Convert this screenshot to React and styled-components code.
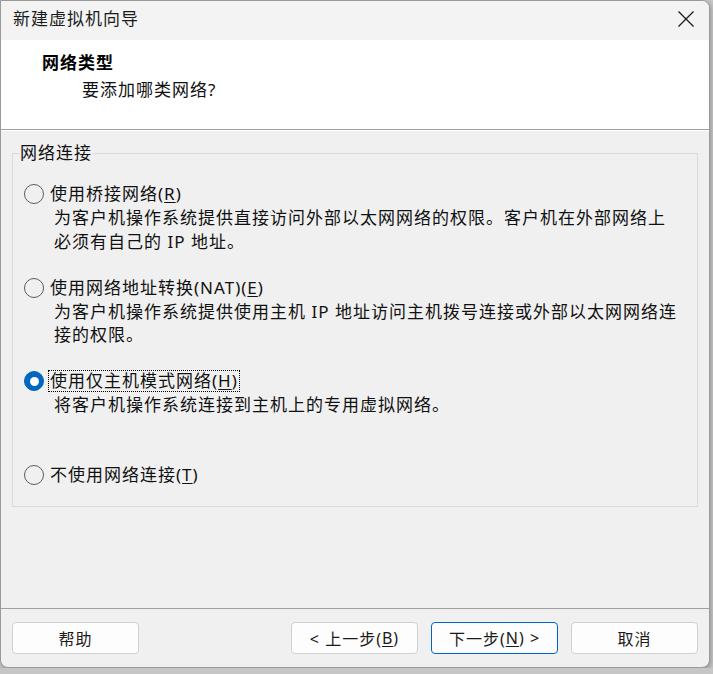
import React from "react";
import styled, { createGlobalStyle } from "styled-components";

const GlobalStyle = createGlobalStyle`
  html, body {
    margin: 0;
    padding: 0;
    background: #c6c6c6;
  }
  body {
    font-family: "Noto Sans", "Noto Sans CJK SC", sans-serif;
    color: #000;
  }
`;

const Window = styled.div`
  box-sizing: border-box;
  width: 710px;
  height: 668px;
  border: 1px solid #9a9a9a;
  border-radius: 0 8px 8px 8px;
  background: #f0f0f0;
  overflow: hidden;
  display: flex;
  flex-direction: column;
  box-shadow: 1px 2px 5px rgba(0, 0, 0, 0.25);
`;

const TitleBar = styled.div`
  height: 39px;
  flex: none;
  background: #f3f3f3;
  display: flex;
  align-items: center;
  justify-content: space-between;
  padding-left: 12px;
`;

const Title = styled.span`
  font-size: 17px;
  letter-spacing: 1px;
  color: #1b1b1b;
  line-height: 24px;
  margin-top: -3px;
`;

const CloseButton = styled.div`
  width: 46px;
  height: 39px;
  display: flex;
  align-items: center;
  justify-content: center;
  margin-top: -4px;
`;

const Header = styled.div`
  flex: none;
  height: 90px;
  background: #ffffff;
  border-bottom: 1px solid #a0a0a0;
  box-sizing: border-box;
  padding: 10px 0 0 41px;
`;

const HeaderTitle = styled.div`
  font-family: "Noto Sans CJK SC", sans-serif;
  font-weight: 700;
  font-size: 17px;
  letter-spacing: 1px;
  line-height: 24px;
`;

const HeaderSub = styled.div`
  font-size: 17px;
  letter-spacing: 1px;
  line-height: 24px;
  margin-top: 4px;
  padding-left: 40px;
  color: #111;
`;

const Main = styled.div`
  flex: 1;
  border-top: 1px solid #ffffff;
  display: flex;
  flex-direction: column;
`;

const Group = styled.fieldset`
  margin: 10px 11px 0 11px;
  padding: 17px 0 19px 0;
  border: 1px solid #dadada;
  min-width: 0;
`;

const Legend = styled.legend`
  font-size: 17px;
  letter-spacing: 1px;
  line-height: 24px;
  padding: 0 1px;
  margin-left: 6px;
  color: #111;
`;

const Option = styled.div`
  display: grid;
  grid-template-columns: 20px 1fr;
  column-gap: 5px;
  align-content: start;
  padding-left: 11px;
  height: ${(p) => (p.$last ? "24px" : "93.5px")};
`;

const Radio = styled.span`
  box-sizing: border-box;
  width: 20px;
  height: 20px;
  border-radius: 50%;
  align-self: center;
  position: relative;
  border: 1px solid ${(p) => (p.$checked ? "#0067c0" : "#5c5c5c")};
  background: ${(p) => (p.$checked ? "#0067c0" : "transparent")};
  &::after {
    content: "";
    display: ${(p) => (p.$checked ? "block" : "none")};
    position: absolute;
    left: 50%;
    top: 50%;
    width: 9px;
    height: 9px;
    margin: -4.5px 0 0 -4.5px;
    border-radius: 50%;
    background: #fff;
  }
`;

const Label = styled.span`
  justify-self: start;
  font-size: 17px;
  letter-spacing: 1px;
  line-height: 20px;
  height: 22px;
  padding: 0 1px;
  margin: 1px 0 1px -1px;
  box-sizing: border-box;
  border: 1px dotted ${(p) => (p.$focus ? "#000" : "transparent")};
  color: #111;
  u {
    text-underline-offset: 2px;
  }
`;

const Desc = styled.div`
  grid-column: 2;
  padding-left: 5px;
  font-size: 17px;
  letter-spacing: 1px;
  line-height: 23.5px;
  color: #111;
  white-space: pre-line;
`;

const Footer = styled.div`
  flex: none;
  height: 59px;
  border-top: 1px solid #a0a0a0;
  box-sizing: border-box;
  display: flex;
  align-items: center;
  padding: 0 11px;
  gap: 13px;
`;

const Spacer = styled.div`
  flex: 1;
`;

const Button = styled.button`
  box-sizing: border-box;
  width: 127px;
  height: 32px;
  border-radius: 4px;
  border: 1px solid ${(p) => (p.$primary ? "#0067c0" : "#d0d0d0")};
  background: #fdfdfd;
  font-family: "Noto Sans", "Noto Sans CJK SC", sans-serif;
  font-size: 16px;
  letter-spacing: 1px;
  color: #1a1a1a;
  padding: 0;
  display: flex;
  align-items: center;
  justify-content: center;
  u {
    text-underline-offset: 2px;
  }
`;

const options = [
  {
    label: (
      <>
        使用桥接网络(<u>R</u>)
      </>
    ),
    desc: "为客户机操作系统提供直接访问外部以太网网络的权限。客户机在外部网络上\n必须有自己的 IP 地址。",
  },
  {
    label: (
      <>
        使用网络地址转换(NAT)(<u>E</u>)
      </>
    ),
    desc: "为客户机操作系统提供使用主机 IP 地址访问主机拨号连接或外部以太网网络连\n接的权限。",
  },
  {
    label: (
      <>
        使用仅主机模式网络(<u>H</u>)
      </>
    ),
    desc: "将客户机操作系统连接到主机上的专用虚拟网络。",
    checked: true,
  },
  {
    label: (
      <>
        不使用网络连接(<u>T</u>)
      </>
    ),
    last: true,
  },
];

export default function App() {
  return (
    <>
      <GlobalStyle />
      <Window>
        <TitleBar>
          <Title>新建虚拟机向导</Title>
          <CloseButton>
            <svg width="18" height="18" viewBox="0 0 18 18">
              <path d="M1.5 1.5 L16.5 16.5 M16.5 1.5 L1.5 16.5" stroke="#1a1a1a" strokeWidth="1.3" fill="none" />
            </svg>
          </CloseButton>
        </TitleBar>
        <Header>
          <HeaderTitle>网络类型</HeaderTitle>
          <HeaderSub>要添加哪类网络?</HeaderSub>
        </Header>
        <Main>
          <Group>
            <Legend>网络连接</Legend>
            {options.map((o, i) => (
              <Option key={i} $last={o.last}>
                <Radio $checked={o.checked} />
                <Label $focus={o.checked}>{o.label}</Label>
                {o.desc && <Desc>{o.desc}</Desc>}
              </Option>
            ))}
          </Group>
        </Main>
        <Footer>
          <Button>帮助</Button>
          <Spacer />
          <Button>
            &lt; 上一步(<u>B</u>)
          </Button>
          <Button $primary>
            下一步(<u>N</u>) &gt;
          </Button>
          <Button>取消</Button>
        </Footer>
      </Window>
    </>
  );
}
